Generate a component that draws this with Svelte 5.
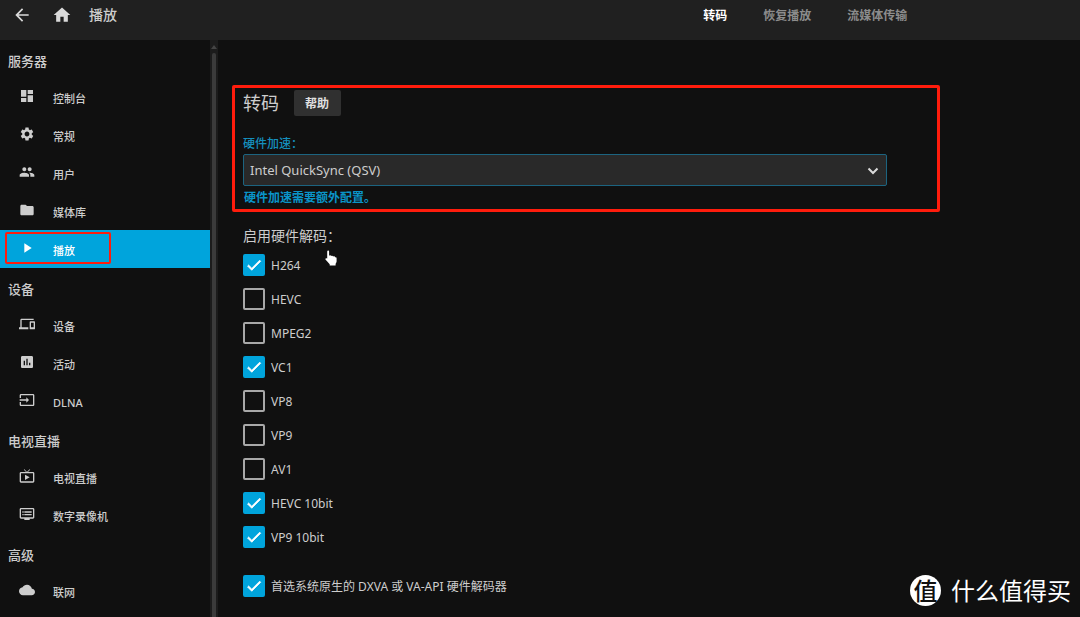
<script lang="ts">
  interface NavItem {
    label: string;
    icon: string;
    active?: boolean;
  }

  interface NavSection {
    title: string;
    items: NavItem[];
  }

  const ICONS: Record<string, string> = {
    back: "M20 11H7.83l5.59-5.59L12 4l-8 8 8 8 1.41-1.41L7.83 13H20v-2z",
    home: "M10 20v-6h4v6h5v-8h3L12 3 2 12h3v8z",
    dashboard: "M3 13h8V3H3v10zm0 8h8v-6H3v6zm10 0h8V11h-8v10zm0-18v6h8V3h-8z",
    settings:
      "M19.14 12.94c.04-.3.06-.61.06-.94 0-.32-.02-.64-.07-.94l2.03-1.58c.18-.14.23-.41.12-.61l-1.92-3.32c-.12-.22-.37-.29-.59-.22l-2.39.96c-.5-.38-1.03-.7-1.62-.94l-.36-2.54c-.04-.24-.24-.41-.48-.41h-3.84c-.24 0-.43.17-.47.41l-.36 2.54c-.59.24-1.13.57-1.62.94l-2.39-.96c-.22-.08-.47 0-.59.22L2.74 8.87c-.12.21-.08.47.12.61l2.03 1.58c-.05.3-.09.63-.09.94s.02.64.07.94l-2.03 1.58c-.18.14-.23.41-.12.61l1.92 3.32c.12.22.37.29.59.22l2.39-.96c.5.38 1.03.7 1.62.94l.36 2.54c.05.24.24.41.48.41h3.84c.24 0 .44-.17.47-.41l.36-2.54c.59-.24 1.13-.56 1.62-.94l2.39.96c.22.08.47 0 .59-.22l1.92-3.32c.12-.22.07-.47-.12-.61l-2.01-1.58zM12 15.6c-1.98 0-3.6-1.62-3.6-3.6s1.62-3.6 3.6-3.6 3.6 1.62 3.6 3.6-1.62 3.6-3.6 3.6z",
    people:
      "M16 11c1.66 0 2.99-1.34 2.99-3S17.66 5 16 5c-1.66 0-3 1.34-3 3s1.34 3 3 3zm-8 0c1.66 0 2.99-1.34 2.99-3S9.66 5 8 5C6.34 5 5 6.34 5 8s1.34 3 3 3zm0 2c-2.33 0-7 1.17-7 3.5V19h14v-2.5c0-2.33-4.67-3.5-7-3.5zm8 0c-.29 0-.62.02-.97.05 1.16.84 1.97 1.97 1.97 3.45V19h6v-2.5c0-2.33-4.67-3.5-7-3.5z",
    folder: "M10 4H4c-1.1 0-1.99.9-1.99 2L2 18c0 1.1.9 2 2 2h16c1.1 0 2-.9 2-2V8c0-1.1-.9-2-2-2h-8l-2-2z",
    play: "M8 5v14l11-7z",
    devices:
      "M4 6h18V4H4c-1.1 0-2 .9-2 2v11H0v3h14v-3H4V6zm19 2h-6c-.55 0-1 .45-1 1v10c0 .55.45 1 1 1h6c.55 0 1-.45 1-1V9c0-.55-.45-1-1-1zm-1 9h-4v-7h4v7z",
    activity:
      "M19 3H5c-1.1 0-2 .9-2 2v14c0 1.1.9 2 2 2h14c1.1 0 2-.9 2-2V5c0-1.1-.9-2-2-2zM9 17H7v-7h2v7zm4 0h-2V7h2v10zm4 0h-2v-4h2v4z",
    input:
      "M21 3.01H3c-1.1 0-2 .9-2 2V9h2V4.99h18v14.03H3V15H1v4.01c0 1.1.9 1.98 2 1.98h18c1.1 0 2-.88 2-1.98v-14c0-1.11-.9-2-2-2zM11 16l4-4-4-4v3H1v2h10v3z",
    livetv:
      "M21 6h-7.59l3.29-3.29L16 2l-4 4-4-4-.71.71L10.59 6H3c-1.1 0-2 .89-2 2v12c0 1.1.9 2 2 2h18c1.1 0 2-.9 2-2V8c0-1.11-.9-2-2-2zm0 14H3V8h18v12zM9 10v8l7-4z",
    dvr:
      "M21 3H3c-1.1 0-2 .9-2 2v12c0 1.1.9 2 2 2h5v2h8v-2h5c1.1 0 1.99-.9 1.99-2L23 5c0-1.1-.9-2-2-2zm0 14H3V5h18v12zm-2-9H8v2h11V8zm0 4H8v2h11v-2zM7 8H5v2h2V8zm0 4H5v2h2v-2z",
    cloud:
      "M19.35 10.04C18.67 6.59 15.64 4 12 4 9.11 4 6.6 5.64 5.35 8.04 2.34 8.36 0 10.91 0 14c0 3.31 2.69 6 6 6h13c2.76 0 5-2.24 5-5 0-2.64-2.05-4.78-4.65-4.96z",
    check: "M9 16.17L4.83 12l-1.42 1.41L9 19 21 7l-1.41-1.41z",
  };

  const sections: NavSection[] = [
    {
      title: "服务器",
      items: [
        { label: "控制台", icon: "dashboard" },
        { label: "常规", icon: "settings" },
        { label: "用户", icon: "people" },
        { label: "媒体库", icon: "folder" },
        { label: "播放", icon: "play", active: true },
      ],
    },
    {
      title: "设备",
      items: [
        { label: "设备", icon: "devices" },
        { label: "活动", icon: "activity" },
        { label: "DLNA", icon: "input" },
      ],
    },
    {
      title: "电视直播",
      items: [
        { label: "电视直播", icon: "livetv" },
        { label: "数字录像机", icon: "dvr" },
      ],
    },
    { title: "高级", items: [{ label: "联网", icon: "cloud" }] },
  ];

  const tabs = ["转码", "恢复播放", "流媒体传输"];
  let currentTab = $state("转码");

  let acceleration = $state("qsv");
  let preferNative = $state(true);

  let codecs = $state([
    { name: "H264", enabled: true },
    { name: "HEVC", enabled: false },
    { name: "MPEG2", enabled: false },
    { name: "VC1", enabled: true },
    { name: "VP8", enabled: false },
    { name: "VP9", enabled: false },
    { name: "AV1", enabled: false },
    { name: "HEVC 10bit", enabled: true },
    { name: "VP9 10bit", enabled: true },
  ]);
</script>

{#snippet icon(name: string)}
  <svg class="icon" viewBox="0 0 24 24" aria-hidden="true"><path d={ICONS[name]} /></svg>
{/snippet}

<div class="page">
  <header class="header">
    <button class="header__button" type="button" aria-label="返回">{@render icon("back")}</button>
    <button class="header__button" type="button" aria-label="首页">{@render icon("home")}</button>
    <h1 class="header__title">播放</h1>
    <nav class="tabs">
      {#each tabs as tab (tab)}
        <button
          class="tabs__tab"
          class:tabs__tab--active={tab === currentTab}
          type="button"
          onclick={() => (currentTab = tab)}
        >
          {tab}
        </button>
      {/each}
    </nav>
  </header>

  <div class="body">
    <aside class="sidebar">
      {#each sections as section (section.title)}
        <h2 class="sidebar__title">{section.title}</h2>
        {#each section.items as item (item.label)}
          <a class="nav-item" class:nav-item--active={item.active} href="#{item.icon}">
            {@render icon(item.icon)}
            <span class="nav-item__label">{item.label}</span>
            {#if item.active}
              <span class="mark mark--nav"></span>
            {/if}
          </a>
        {/each}
      {/each}
    </aside>
    <div class="scrollbar" aria-hidden="true">
      <span class="scrollbar__arrow"></span>
      <span class="scrollbar__thumb"></span>
    </div>

    <main class="content">
      <section class="transcoding">
        <div class="transcoding__head">
          <h2 class="transcoding__title">转码</h2>
          <button class="help" type="button">帮助</button>
        </div>
        <label class="field-label" for="acceleration">硬件加速：</label>
        <div class="select">
          <select id="acceleration" class="select__control" bind:value={acceleration}>
            <option value="qsv">Intel QuickSync (QSV)</option>
          </select>
          <svg class="select__arrow" viewBox="0 0 12 8" aria-hidden="true"><path d="M1.5 1.5 6 6l4.5-4.5" /></svg>
        </div>
        <p class="field-note"><a href="#hardware">硬件加速需要额外配置。</a></p>
        <span class="mark mark--section"></span>
      </section>

      <h3 class="codecs__title">
        启用硬件解码：
        <svg class="pointer" viewBox="0 0 12 16" aria-hidden="true">
          <path d="M2.2 1.4c0-1.2 1.9-1.2 1.9 0v4.4c.2-.8 1.9-.7 2 .3.3-.7 1.8-.6 2 .5.5-.6 2-.4 2.1.8.6-.3 1.4.1 1.4.9v3c0 1-.5 1.7-1 2.5v1.7H4.700v-1.300L.7 9.800c-1-1.300.5-2.200 1.500-1.200z" />
        </svg>
      </h3>
      {#each codecs as codec (codec.name)}
        <label class="check">
          <span class="check__box">
            <input class="check__input" type="checkbox" bind:checked={codec.enabled} />
            {@render icon("check")}
          </span>
          <span class="check__label">{codec.name}</span>
        </label>
      {/each}
      <label class="check check--spaced">
        <span class="check__box">
          <input class="check__input" type="checkbox" bind:checked={preferNative} />
          {@render icon("check")}
        </span>
        <span class="check__label">首选系统原生的 DXVA 或 VA-API 硬件解码器</span>
      </label>
    </main>
  </div>

  <div class="watermark">
    <span class="watermark__badge">值</span>
    <span>什么值得买</span>
  </div>
</div>

<style>
  :global(body) {
    margin: 0;
    background: #101010;
  }

  .page {
    position: relative;
    display: flex;
    flex-direction: column;
    min-height: 100vh;
    background: #101010;
    color: #cdcdcd;
    font-family: "Noto Sans", "Noto Sans CJK SC", sans-serif;
    font-size: 12px;
    line-height: 18px;
  }

  .page *,
  .page {
    box-sizing: border-box;
  }

  h1,
  h2,
  h3,
  p {
    margin: 0;
  }

  button {
    padding: 0;
    border: none;
    background: none;
    color: inherit;
    font: inherit;
    cursor: pointer;
  }

  a {
    color: inherit;
    text-decoration: none;
  }

  .icon {
    display: block;
    width: 16px;
    height: 16px;
    fill: currentColor;
  }

  .header {
    display: flex;
    align-items: center;
    height: 40px;
    padding: 0 16% 10px 12px;
    background: #202020;
  }

  .header__button {
    margin-right: 20px;
    color: #dadada;
  }

  .header__button + .header__button {
    margin-right: 17px;
  }

  .header__button .icon {
    width: 20px;
    height: 20px;
  }

  .header__title {
    font-size: 14px;
    font-weight: 500;
  }

  .tabs {
    display: flex;
    gap: 36px;
    margin-left: auto;
    padding-top: 2px;
  }

  .tabs__tab {
    color: #8c8c8c;
    font-weight: 700;
  }

  .tabs__tab--active {
    color: #fff;
  }

  .body {
    display: flex;
    flex: 1;
  }

  .sidebar {
    flex: 0 0 210px;
  }

  .sidebar__title {
    height: 38px;
    padding: 12px 8px 0;
    font-size: 13px;
    font-weight: 500;
  }

  .nav-item {
    position: relative;
    display: flex;
    align-items: center;
    gap: 18px;
    height: 38px;
    padding: 0 19px;
    font-size: 11px;
    font-weight: 500;
  }

  .nav-item .icon {
    margin-bottom: 2px;
  }

  .nav-item__label {
    padding-top: 3px;
  }

  .nav-item--active {
    background: #00a4dc;
    color: #fff;
  }

  .mark {
    position: absolute;
    border: 2px solid #ff1c0c;
    border-radius: 2px;
    pointer-events: none;
  }

  .mark--nav {
    top: 2px;
    left: 5px;
    width: 106px;
    height: 32px;
  }

  .mark--section {
    inset: -5px -53px -5px -11px;
    border-width: 3px;
  }

  .scrollbar {
    display: flex;
    flex: 0 0 8px;
    flex-direction: column;
    align-items: center;
    gap: 4px;
    padding-top: 5px;
    background: #1c1c1c;
  }

  .scrollbar__arrow {
    border: 3px solid transparent;
    border-top: none;
    border-bottom: 4px solid #444;
  }

  .scrollbar__thumb {
    flex: 1;
    width: 4px;
    border-radius: 2px 2px 0 0;
    background: #3b3b3b;
  }

  .content {
    flex: 1;
    padding: 50px 0 14px 25px;
  }

  .transcoding {
    position: relative;
    width: 77%;
  }

  .transcoding__head {
    display: flex;
    align-items: center;
    gap: 15px;
    margin-bottom: 19px;
  }

  .transcoding__title {
    font-size: 18px;
    font-weight: 400;
  }

  .help {
    height: 26px;
    padding: 1px 12px 0 11px;
    border-radius: 2px;
    background: #303030;
    color: #e0e0e0;
    font-weight: 700;
  }

  .field-label {
    display: block;
    margin-bottom: 1px;
    color: #158fbd;
    font-weight: 500;
  }

  .select {
    position: relative;
  }

  .select__control {
    display: block;
    width: 100%;
    height: 32px;
    padding: 0 32px 0 6px;
    border: 1px solid #1c6480;
    border-radius: 2px;
    outline: none;
    appearance: none;
    background: #292929;
    color: #cdcdcd;
    font: inherit;
    font-size: 13px;
  }

  .select__arrow {
    position: absolute;
    top: 13px;
    right: 8px;
    width: 12px;
    height: 8px;
    fill: none;
    stroke: #dadada;
    stroke-width: 2;
    pointer-events: none;
  }

  .field-note {
    padding: 3px 1px 0;
    color: #0a94c8;
    font-weight: 700;
  }

  .codecs__title {
    position: relative;
    width: max-content;
    margin: 19px 0 2px;
    font-size: 14px;
    font-weight: 400;
    line-height: 20px;
  }

  .pointer {
    position: absolute;
    top: 24px;
    left: 82px;
    width: 12px;
    height: 16px;
    fill: #fff;
  }

  .check {
    display: flex;
    align-items: center;
    gap: 6px;
    height: 34px;
    width: max-content;
  }

  .check__label {
    padding-top: 2px;
  }

  .check--spaced {
    margin-top: 15px;
  }

  .check__box {
    display: grid;
    place-items: center;
    width: 22px;
    height: 22px;
  }

  .check__input {
    grid-area: 1 / 1;
    width: 22px;
    height: 22px;
    margin: 0;
    border: 2px solid #a8a8a8;
    border-radius: 2px;
    appearance: none;
  }

  .check__input:checked {
    border-color: #00a4dc;
    background: #00a4dc;
  }

  .check__box .icon {
    grid-area: 1 / 1;
    width: 18px;
    height: 18px;
    color: #fff;
    stroke: #fff;
    stroke-width: 1;
    visibility: hidden;
    pointer-events: none;
  }

  .check__input:checked + .icon {
    visibility: visible;
  }

  .watermark {
    position: absolute;
    right: 9px;
    bottom: 11px;
    display: flex;
    align-items: center;
    gap: 10px;
    color: #fff;
    font-size: 24px;
    line-height: 31px;
  }

  .watermark__badge {
    width: 31px;
    height: 31px;
    border-radius: 50%;
    background: #fff;
    color: #101010;
    font-weight: 500;
    text-align: center;
  }
</style>
